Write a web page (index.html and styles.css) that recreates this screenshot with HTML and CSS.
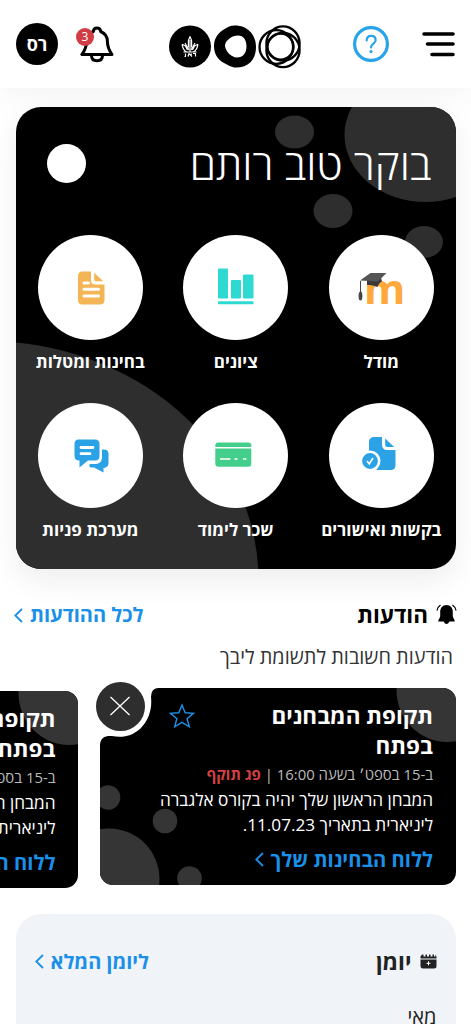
FILE: index.html
```
<!DOCTYPE html>
<html lang="he" dir="rtl">
<head>
    <meta charset="UTF-8">
    <meta name="viewport" content="width=device-width, initial-scale=1.0">
    <title>מידע אישי לסטודנט</title>
    <link rel="stylesheet" href="styles.css">
</head>
<body>
    <header class="top-bar">
        <svg class="menu-icon" width="33" height="26" viewBox="0 0 33 26">
            <path d="M2 3H31M5.500 13H31M10 23.500H31" stroke="#000" stroke-width="3.600" stroke-linecap="round"/>
        </svg>
        <div class="help">
            <svg width="36" height="36" viewBox="0 0 36 36" fill="none" stroke="#29a3ea">
                <circle cx="18" cy="18" r="16.400" stroke-width="3.200"/>
                <path d="M13.700 14.500C13.700 11.500 15.500 9.900 18.200 9.900S22.600 11.700 22.600 14.200C22.600 17.500 18 17.600 18 21.400" stroke-width="2.200" stroke-linecap="round"/>
                <circle cx="18" cy="25.600" r="1.600" fill="#29a3ea" stroke="none"/>
            </svg>
        </div>
        <svg class="logo" width="132" height="44" viewBox="0 0 132 44">
            <circle cx="21" cy="21.500" r="21"/>
            <g fill="none" stroke="#fff" stroke-width="1.200">
                <path d="M21 11.500L19.400 15.500V22.500M21 11.500L22.600 15.500V22.500M21 15V27"/>
                <path d="M13 19.300L16.500 21 18.500 25M29 19.300L25.500 21 23.500 25M13 19.300C14 24 16 26.500 18 27H24C26 26.500 28 24 29 19.300M16 18L20 25M26 18L22 25M14.500 27H27.500"/>
                <path d="M16.500 28.500V31.500M15.500 31.500H17M19 31.500L20 28.500 23 31.500M22.500 28.500L22 30M24 28.500H26.500V31.500"/>
            </g>
            <path fill-rule="evenodd" d="M66 .500C78 .500 87 9 87 22S79 42.500 67 42.500C62 42.500 59 40 55 38C48 34 45 28 45 21C45 14 48 9 54 5C58 2.500 61 .500 66 .500ZM69 10.500C63 10.500 56 15.500 56 20.500C56 25.500 62 32.500 68 32.500C74 32.500 77.500 28 77.500 21.500C77.500 15 74.500 10.500 69 10.500Z"/>
            <g fill="none" stroke="#000" stroke-width="2.300">
                <ellipse cx="107.300" cy="22" rx="16.800" ry="16.800"/>
                <ellipse cx="114" cy="18.500" rx="16.600" ry="17.200"/>
                <ellipse cx="114" cy="25" rx="16.600" ry="17.200"/>
                <circle cx="111.500" cy="21.700" r="13"/>
            </g>
        </svg>
        <div class="bell">
            <svg width="34" height="38" viewBox="0 0 34 38" fill="none" stroke="#000" stroke-width="3" stroke-linejoin="round">
                <path d="M17 2C14.500 2 13.500 3.500 13.300 5.500C8.500 7.500 6.600 11 6.600 15.500C6.600 21 5.500 23.500 1.900 28.500H32C28.500 23.500 27.400 21 27.400 15.500C27.400 11 25.500 7.500 20.700 5.500C20.500 3.500 19.500 2 17 2Z"/>
                <path d="M11.500 29.500C11.500 32.800 13.500 34.800 17 34.800S22.500 32.800 22.500 29.500"/>
            </svg>
            <span class="bell-count">3</span>
        </div>
        <div class="avatar">רס</div>
    </header>

    <main>
        <section class="hero">
            <svg class="hero-bg" width="440" height="462" viewBox="15.500 107 440 462" fill="#2e2e2e">
                <ellipse cx="425" cy="135" rx="81" ry="67"/>
                <ellipse cx="294" cy="132" rx="19.500" ry="16.500"/>
                <ellipse cx="332.500" cy="211" rx="19.500" ry="17"/>
                <ellipse cx="423.500" cy="242" rx="19" ry="16"/>
                <ellipse cx="-15" cy="580" rx="273" ry="239"/>
            </svg>
            <div class="greeting">
                <h1>בוקר טוב רותם</h1>
                <span class="dot"></span>
            </div>
            <div class="apps">
                <a class="app">
                    <span class="app-icon">
                        <svg width="105" height="105" viewBox="0 0 105 105">
                            <text x="55.500" y="68.500" direction="ltr" text-anchor="middle" class="moodle-m">m</text>
                            <path d="M38 43V50C42 50 45 50.500 48.500 52C49.500 49 51 47.500 53 46.500L51.500 41Z" fill="#3a3a3a"/>
                            <path d="M31 45.500L41.500 38H57.500L49 46.500Z" fill="#555"/>
                            <path d="M31.500 46V58" stroke="#444" fill="none"/>
                            <ellipse cx="31.500" cy="61" rx="1.900" ry="4.500" fill="#444"/>
                        </svg>
                    </span>
                    <span class="app-label">מודל</span>
                </a>
                <a class="app">
                    <span class="app-icon">
                        <svg width="105" height="105" viewBox="0 0 105 105" fill="#2ed9d1">
                            <rect x="35" y="33.500" width="10" height="30" rx="1"/>
                            <rect x="48" y="45" width="10" height="18.500" rx="1"/>
                            <rect x="60" y="39.500" width="10.500" height="24" rx="1"/>
                            <rect x="35" y="66.300" width="35.500" height="3" rx="1"/>
                        </svg>
                    </span>
                    <span class="app-label">ציונים</span>
                </a>
                <a class="app">
                    <span class="app-icon">
                        <svg width="105" height="105" viewBox="0 0 105 105" fill="#f4b556">
                            <path d="M44 36.500H53V45C53 48 54.500 49.500 57.500 49.500H66.500V65C66.500 68 65 69.500 62 69.500H44.500C41.500 69.500 40 68 40 65V41C40 38 41.500 36.500 44 36.500Z"/>
                            <path d="M56.200 37.800L65.200 46.200H58.200C56.800 46.200 56.200 45.600 56.200 44.200Z"/>
                            <path d="M46 48H50.500M46 54.300H60.500M46 61H60.500" stroke="#fff" stroke-width="3" stroke-linecap="round"/>
                        </svg>
                    </span>
                    <span class="app-label">בחינות ומטלות</span>
                </a>
                <a class="app">
                    <span class="app-icon">
                        <svg width="105" height="105" viewBox="0 0 105 105" fill="#2ca2e6">
                            <path d="M45.500 34H53V41.500C53 45 55 47 58.500 47H66.500V62C66.500 65 65 67 61.500 67H48L40 58V39C40 36 42 34 45.500 34Z"/>
                            <path d="M56.200 35.500L65.200 44H58.500C56.800 44 56.200 43.200 56.200 42Z"/>
                            <circle cx="41" cy="58" r="9.200" stroke="#fff" stroke-width="2.600"/>
                            <path d="M38 58L40.300 60.800 44 55" fill="none" stroke="#fff" stroke-width="1.700"/>
                        </svg>
                    </span>
                    <span class="app-label">בקשות ואישורים</span>
                </a>
                <a class="app">
                    <span class="app-icon">
                        <svg width="105" height="105" viewBox="0 0 105 105" fill="#44ce8b">
                            <rect x="32.300" y="39.500" width="36" height="24.300" rx="3"/>
                            <path d="M32 44.800H69M37 56H47.500M51.500 56H54.500M60 56H63.500" stroke="#fff" stroke-width="1.600"/>
                        </svg>
                    </span>
                    <span class="app-label">שכר לימוד</span>
                </a>
                <a class="app">
                    <span class="app-icon">
                        <svg width="105" height="105" viewBox="0 0 105 105" fill="#2ca2e6">
                            <path d="M64 46.500H66C69 46.500 70.500 48 70.500 51V60C70.500 63 69 64.500 65.500 65V69.500L56 64.500H52.500C51 64 51 61.800 52 61H57C61.500 61 64 58.500 64 54Z"/>
                            <path d="M40.500 36.500H57C60 36.500 61.500 38 61.500 41V53C61.500 56 60 57.500 57 57.500H50L41.500 64.500V57.500C38 57.500 36.500 56 36.500 53V41C36.500 38 38 36.500 40.500 36.500Z"/>
                            <path d="M43 44.500H55M43 50.700H52" stroke="#fff" stroke-width="2.800" stroke-linecap="round"/>
                        </svg>
                    </span>
                    <span class="app-label">מערכת פניות</span>
                </a>
            </div>
        </section>

        <section class="messages">
            <div class="section-head">
                <svg width="21" height="22" viewBox="0 0 21 22">
                    <path d="M10.500 1C14.500 1 16.800 4 16.800 8V12C16.800 14 18.500 15 18.800 17.500H13.500Q10.500 22.500 7.500 17.500H2.200C2.500 15 4.200 14 4.200 12V8C4.200 4 6.500 1 10.500 1Z"/>
                    <path d="M1 6.500Q1.500 3 4.500 1M20 6.500Q19.500 3 16.500 1" fill="none" stroke="#000" stroke-width="1.300"/>
                </svg>
                <h2>הודעות</h2>
                <a class="more">לכל ההודעות
                    <svg width="9" height="15" viewBox="0 0 9 15"><path d="M8 1L1.300 7.500 8 14"/></svg>
                </a>
            </div>
            <p class="sub">הודעות חשובות לתשומת ליבך</p>

            <div class="cards">
                <article class="card">
                    <svg class="card-bg" width="356" height="197" viewBox="0 0 356 197" fill="#353535">
                        <ellipse cx="347" cy="2" rx="50.500" ry="52"/>
                        <circle cx="8" cy="109.500" r="12.300"/>
                        <circle cx="65" cy="133" r="12.300"/>
                        <ellipse cx="9" cy="191" rx="50.500" ry="50.500"/>
                        <circle cx="89.500" cy="190.500" r="12.300"/>
                        <path d="M-1 -1H58V0Q51 .500 51 9C53.500 31 38 53 12 48C5 47.500 .500 49.500 0 57H-1Z" fill="#fff"/>
                    </svg>
                    <span class="close">
                        <svg width="20" height="20" viewBox="0 0 20 20"><path d="M.500 1L19.500 19M19.500 1L.500 19" stroke="#fff" stroke-width="1.300"/></svg>
                    </span>
                    <svg class="star" width="26" height="26" viewBox="0 0 26 26">
                        <path d="M13 2L16.200 9.800 24.500 10.400 18.100 15.700 20.300 23.800 13 19.300 5.700 23.800 7.900 15.700 1.500 10.400 9.800 9.800Z"/>
                    </svg>
                    <h3>תקופת המבחנים<br>בפתח</h3>
                    <p class="date">ב-15 בספט׳ בשעה 16:00 | <b>פג תוקף</b></p>
                    <p class="text">המבחן הראשון שלך יהיה בקורס אלגברה<br>ליניארית בתאריך 11.07.23.</p>
                    <a class="card-link">ללוח הבחינות שלך
                        <svg width="9" height="15" viewBox="0 0 9 15"><path d="M8 1L1.300 7.500 8 14"/></svg>
                    </a>
                </article>
                <article class="card card-next">
                    <svg class="card-bg" width="356" height="197" viewBox="0 0 356 197" fill="#353535">
                        <ellipse cx="347" cy="2" rx="50.500" ry="52"/>
                    </svg>
                    <h3>תקופת המבחנים<br>בפתח</h3>
                    <p class="date">ב-15 בספט׳ בשעה 16:00</p>
                    <p class="text">המבחן הראשון שלך יהיה בקורס אלגברה<br>ליניארית בתאריך 11.07.23.</p>
                    <a class="card-link">ללוח הבחינות שלך</a>
                </article>
            </div>
        </section>

        <section class="calendar">
            <div class="section-head">
                <svg width="17" height="15" viewBox="0 0 17 15" fill="#222">
                    <path d="M.500 5.500H16.500V12Q16.500 14.500 14 14.500H3Q.500 14.500 .500 12Z"/>
                    <path d="M.500 4.500V2.500L2 .500H3.500V2.500H5.500V.500H7V2.500H9V.500H10.500V2.500H12.500V.500H14V2.500H15.500V.500L16.500 2.500V4.500Z"/>
                    <path d="M8.500 7.300V11.300M6.500 9.300H10.500" stroke="#fff"/>
                </svg>
                <h2>יומן</h2>
                <a class="more">ליומן המלא
                    <svg width="9" height="15" viewBox="0 0 9 15"><path d="M8 1L1.300 7.500 8 14"/></svg>
                </a>
            </div>
            <p class="month">מאי</p>
        </section>
    </main>
</body>
</html>
```
FILE: styles.css
```
* {
    box-sizing: border-box;
}
body {
    margin: 0;
    height: 1024px;
    overflow: hidden;
    background-color: #fff;
    font-family: "Open Sans", "Noto Sans", sans-serif;
    color: #000;
}
h1, h2, h3, p {
    margin: 0;
}
svg {
    display: block;
    flex-shrink: 0;
}
.top-bar {
    display: flex;
    align-items: center;
    height: 88px;
    padding-right: 16px;
    background-color: #fff;
    box-shadow: 0 0 40px rgba(0, 0, 0, 0.07);
}
.help {
    margin-right: 33px;
}
.logo {
    margin-right: 52px;
    margin-top: 6px;
}
.bell {
    position: relative;
    margin-right: 55px;
    margin-top: 2px;
}
.bell-count {
    position: absolute;
    left: -4px;
    top: 2px;
    width: 18px;
    height: 18px;
    border-radius: 50%;
    background-color: #d13c45;
    color: #fff;
    font-size: 12px;
    line-height: 18px;
    text-align: center;
}
.avatar {
    width: 42px;
    height: 42px;
    margin-right: 22px;
    border-radius: 50%;
    background-color: #000;
    color: #fff;
    font-size: 18px;
    font-weight: 700;
    line-height: 42px;
    text-align: center;
}
.hero {
    position: relative;
    width: 440px;
    height: 462px;
    margin: 19px 15.5px 0 0;
    border-radius: 25px;
    background-color: #000;
    color: #fff;
    box-shadow: 0 12px 30px rgba(0, 0, 0, 0.07);
}
.hero-bg {
    position: absolute;
    left: 0;
    top: 0;
    border-radius: 25px;
}
.greeting {
    position: relative;
    display: flex;
    justify-content: space-between;
    align-items: center;
    height: 127.5px;
    padding: 0 24px 14px 31px;
}
.greeting h1 {
    font-size: 42.7px;
    font-weight: 300;
    line-height: 60px;
}
.dot {
    width: 39px;
    height: 39px;
    border-radius: 50%;
    background-color: #fff;
}
.apps {
    position: relative;
    display: grid;
    grid-template-columns: repeat(3, 145.5px);
    grid-auto-rows: 168.5px;
    margin-right: 1.5px;
}
.app {
    display: flex;
    flex-direction: column;
    align-items: center;
}
.app-icon {
    border-radius: 50%;
    background-color: #fff;
}
.app-label {
    margin-top: 9px;
    font-size: 17px;
    font-weight: 700;
    line-height: 26px;
    white-space: nowrap;
}
.moodle-m {
    font-family: "Open Sans", sans-serif;
    font-size: 42px;
    font-weight: 700;
    fill: #ffa93a;
}
.section-head {
    display: flex;
    align-items: center;
    height: 30px;
}
.section-head h2 {
    margin-right: 8px;
    font-size: 22.5px;
    font-weight: 700;
    line-height: 30px;
}
.more, .card-link {
    display: flex;
    align-items: center;
    gap: 7px;
    color: #1a90e8;
    font-size: 20px;
    font-weight: 700;
    line-height: 30px;
    white-space: nowrap;
}
.more {
    margin-right: auto;
}
.more path, .card-link path {
    fill: none;
    stroke: #1a90e8;
    stroke-width: 1.8;
}
.messages {
    padding: 31px 14px 0 14px;
    overflow: hidden;
}
.sub {
    margin: 12px 4px 0 0;
    font-size: 19.9px;
    line-height: 30px;
    color: #333;
}
.cards {
    display: flex;
    gap: 21.5px;
    margin: 16px 1.5px 0 0;
}
.card {
    position: relative;
    flex-shrink: 0;
    width: 356px;
    height: 197px;
    padding: 13px 22.5px 0 0;
    border-radius: 13px;
    background-color: #000;
    color: #fff;
}
.card-next {
    margin-top: 2.5px;
}
.card-bg {
    position: absolute;
    left: 0;
    top: 0;
    border-radius: 0 13px 13px 13px;
}
.close {
    position: absolute;
    left: -4px;
    top: -6.5px;
    display: flex;
    align-items: center;
    justify-content: center;
    width: 49px;
    height: 49px;
    border-radius: 50%;
    background-color: #2e2e2e;
}
.star {
    position: absolute;
    left: 69px;
    top: 15px;
    fill: none;
    stroke: #1a90e8;
    stroke-width: 1.4;
}
.card h3, .card p, .card-link {
    position: relative;
}
.card h3 {
    font-size: 22.5px;
    font-weight: 700;
    line-height: 30px;
}
.date {
    font-size: 14.9px;
    line-height: 26px;
    color: #bbb;
}
.date b {
    color: #d64045;
}
.text {
    font-size: 17.2px;
    line-height: 25px;
}
.card-link {
    margin-top: 7px;
    font-size: 20.2px;
}
.calendar {
    width: 440px;
    height: 140px;
    margin: 26px 15.5px 0 0;
    padding: 33px 19px 0;
    border-radius: 25px;
    background-color: #f0f4f8;
    color: #222;
}
.month {
    margin-top: 25px;
    font-size: 20px;
    line-height: 30px;
}
```
